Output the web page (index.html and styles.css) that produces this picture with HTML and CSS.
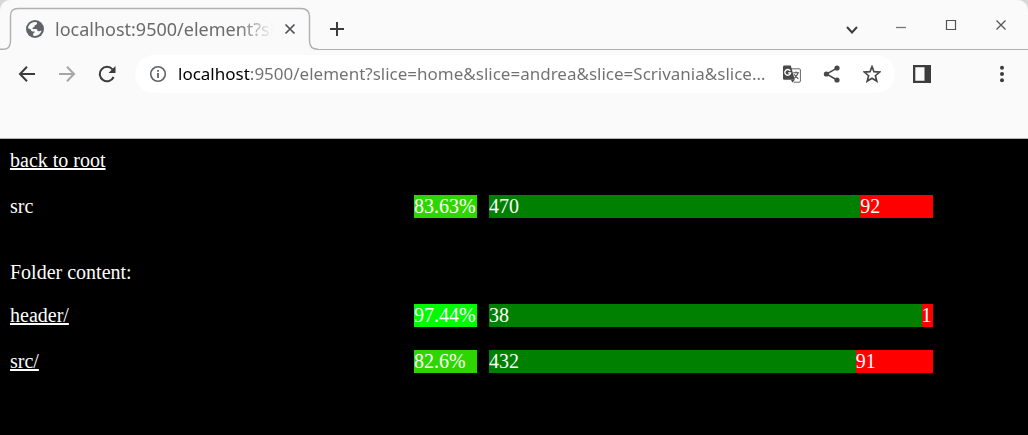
FILE: index.html
```html
<!DOCTYPE html>
<html lang="en">
<head>
<meta charset="utf-8">
<meta name="viewport" content="width=device-width, initial-scale=1">
<title>localhost:9500/element</title>
<link rel="stylesheet" href="styles.css">
</head>
<body>
<header class="browser">
  <div class="tabstrip">
    <div class="tab">
      <svg class="tab-outline" width="318" height="50" viewBox="0 0 318 50" fill="none" stroke="#b0b0b0" stroke-width="1.4"><path d="M0 49.3H3Q10.5 49.3 10.5 41V16Q10.5 8.5 18 8.5H301Q309.5 8.5 309.5 17V41Q309.5 49.3 318 49.3"/></svg>
      <svg class="icon" width="18" height="18" viewBox="0 0 18 18"><circle cx="9" cy="9" r="9" fill="#5f6368"/><path d="M2 8.2C2.3 5 5 2.3 8.5 2L10.8 2.3Q11.7 3.8 10.2 4.8L8.5 5.5V7L6.8 7.6L6.6 9H10Q11.7 9.2 11.5 11L13.4 11.3L15.5 10.6C14.8 13.8 12 16 9 16L7.2 15.7V13.2L8.6 12.5V11.6L6.5 11.5Q4.8 11 4.7 9.3Z" fill="#fafafa"/><path d="M10.7 5.8L12.7 4.4V3.1Q15.5 5 16 8L14 9.2L12.6 8.6L12.4 7.5L10.7 7.1Z" fill="#5f6368"/></svg>
      <span class="tab-title">localhost:9500/element?slice</span>
      <button class="icon-button close-tab" aria-label="Close tab"><svg width="12" height="12" viewBox="0 0 12 12" fill="none" stroke="#505256" stroke-width="1.7"><path d="M1.5 1.5L10.5 10.5M10.5 1.5L1.5 10.5"/></svg></button>
    </div>
    <div class="strip-rest">
      <button class="icon-button" aria-label="New tab"><svg width="16" height="16" viewBox="0 0 16 16" fill="none" stroke="#3c3c3c" stroke-width="2"><path d="M8 1V15M1 8H15"/></svg></button>
      <div class="window-controls">
        <button class="icon-button search-tabs" aria-label="Search tabs"><svg width="14" height="10" viewBox="0 0 14 10" fill="none" stroke="#3c3c3c" stroke-width="2"><path d="M2 2L7 7.5L12 2"/></svg></button>
        <button class="icon-button" aria-label="Minimize"><svg width="12" height="12" viewBox="0 0 12 12" fill="none" stroke="#777" stroke-width="1.3"><path d="M1 8.5H11"/></svg></button>
        <button class="icon-button" aria-label="Maximize"><svg width="12" height="12" viewBox="0 0 12 12" fill="none" stroke="#555" stroke-width="1.2"><path d="M1.5 1.5H10.5V10.5H1.5Z"/></svg></button>
        <button class="icon-button" aria-label="Close"><svg width="12" height="12" viewBox="0 0 12 12" fill="none" stroke="#555" stroke-width="1.3"><path d="M1.5 1.5L10.5 10.5M10.5 1.5L1.5 10.5"/></svg></button>
      </div>
    </div>
  </div>
  <div class="toolbar">
    <nav class="history" aria-label="History">
      <button class="icon-button" aria-label="Back"><svg width="18" height="18" viewBox="0 0 18 18" fill="none" stroke="#3c3c3c" stroke-width="2"><path d="M17 9H2.5M9 1.8L2 9L9 16.2"/></svg></button>
      <button class="icon-button" aria-label="Forward" disabled><svg width="18" height="18" viewBox="0 0 18 18" fill="none" stroke="#a6a6a6" stroke-width="2"><path d="M1 9H15.5M9 1.8L16 9L9 16.2"/></svg></button>
      <button class="icon-button" aria-label="Reload"><svg width="18" height="18" viewBox="0 0 18 18"><path d="M15.6 12A7.2 7.2 0 1 1 14.5 4.4" fill="none" stroke="#3c3c3c" stroke-width="2"/><path d="M17.5 1V8H10.5Z" fill="#3c3c3c"/></svg></button>
    </nav>
    <div class="omnibox">
      <button class="icon-button" aria-label="View site information"><svg width="18" height="18" viewBox="0 0 18 18"><circle cx="9" cy="9" r="7.3" fill="none" stroke="#5f6368" stroke-width="1.6"/><path d="M9 8V13M9 5V6.7" stroke="#5f6368" stroke-width="1.8"/></svg></button>
      <input class="address" type="text" aria-label="Address" value="localhost:9500/element?slice=home&amp;slice=andrea&amp;slice=Scrivania&amp;slice…">
      <button class="icon-button" aria-label="Translate this page"><svg width="18" height="18" viewBox="0 0 18 18"><path d="M8 3.8H16.2Q17.4 3.8 17.4 5V16Q17.4 17.2 16.2 17.2H10.5" fill="#fff" stroke="#666" stroke-width="1"/><path d="M1.2 0.5H7.8L11.8 14.7H1.2Q0 14.7 0 13.5V1.7Q0 .5 1.2 .5Z" fill="#484848"/><path d="M7.8 14.7H11.8L9.5 17.5Z" fill="#484848"/><path d="M7.2 5.8A2.9 2.9 0 1 0 7.6 7.9H5.1" fill="none" stroke="#fff" stroke-width="1.4"/><path d="M10.2 7.8H16M13 6.4V7.8M15 8Q14 11.2 11.3 13.2M11.2 9.2Q12.5 12 15.4 13.7" fill="none" stroke="#555" stroke-width="1.1"/></svg></button>
      <button class="icon-button" aria-label="Share this page"><svg width="18" height="18" viewBox="0 0 18 18"><path d="M14 3.2L3.5 9L14 15" fill="none" stroke="#484848" stroke-width="1.5"/><g fill="#484848"><circle cx="14" cy="3" r="2.6"/><circle cx="3.4" cy="9" r="2.6"/><circle cx="14" cy="15" r="2.6"/></g></svg></button>
      <button class="icon-button" aria-label="Bookmark this tab"><svg width="18" height="18" viewBox="0 0 18 18" fill="none" stroke="#484848" stroke-width="1.7"><path d="M9 1.6L11 6.7L16.7 7.1L12.4 10.7L13.8 16.1L9 13.2L4.2 16.1L5.6 10.7L1.3 7.1L7 6.7Z"/></svg></button>
    </div>
    <button class="icon-button side-panel" aria-label="Side panel"><svg width="18" height="18" viewBox="0 0 18 18"><path d="M0 0H18V18H0ZM2.3 2.3V15.7H11.5V2.3Z" fill="#3c3c3c" fill-rule="evenodd"/></svg></button>
    <button class="icon-button menu" aria-label="Menu"><svg width="18" height="18" viewBox="0 0 18 18" fill="#3c3c3c"><circle cx="9" cy="2.7" r="2"/><circle cx="9" cy="9" r="2"/><circle cx="9" cy="15.3" r="2"/></svg></button>
  </div>
</header>
<main class="report">
  <a class="back" href="#">back to root</a>
  <section class="row">
    <span>src</span>
    <span class="percent">83.63%</span>
    <div class="bar"><span class="covered" style="flex-grow:470">470</span><span class="missed" style="flex-grow:92">92</span></div>
  </section>
  <p class="heading">Folder content:</p>
  <section class="folder">
    <div class="row">
      <span><a href="#">header/</a></span>
      <span class="percent high">97.44%</span>
      <div class="bar"><span class="covered" style="flex-grow:38">38</span><span class="missed" style="flex-grow:1">1</span></div>
    </div>
    <div class="row">
      <span><a href="#">src/</a></span>
      <span class="percent">82.6%</span>
      <div class="bar"><span class="covered" style="flex-grow:432">432</span><span class="missed" style="flex-grow:91">91</span></div>
    </div>
  </section>
</main>
</body>
</html>
```
FILE: styles.css
```css
* {
  box-sizing: border-box;
}

html {
  background: #000;
}

body {
  margin: 0;
  background: #000;
  color: #fff;
  font: 20px/22px "Liberation Serif", serif;
}

.browser {
  background: #d8d8d8;
  border-bottom: 1px solid #b5b5b5;
  font-family: "Noto Sans", sans-serif;
}

.tabstrip {
  display: flex;
  height: 50px;
  background: #fafafa;
  border-radius: 10px 10px 0 0;
}

.tab {
  position: relative;
  flex: 0 0 318px;
  min-width: 0;
  width: 318px;
  display: flex;
  align-items: center;
  padding: 8px 22px 0 26px;
}

.tab-outline {
  position: absolute;
  inset: 0;
}

.tab-title {
  flex: 1;
  min-width: 0;
  margin: 0 11px;
  overflow: hidden;
  white-space: nowrap;
  color: #6b6b6b;
  font-size: 18px;
  -webkit-mask-image: linear-gradient(to right, #000 84%, transparent);
  mask-image: linear-gradient(to right, #000 84%, transparent);
}

.icon,
.icon-button {
  flex: none;
}

.icon-button {
  display: flex;
  align-items: center;
  justify-content: center;
  padding: 0;
  border: 0;
  background: none;
}

.strip-rest {
  flex: 1;
  display: flex;
  align-items: center;
  justify-content: space-between;
  padding: 8px 21px 0 11px;
  border-bottom: 1px solid #b0b0b0;
}

.window-controls {
  display: flex;
  align-items: center;
  gap: 38px;
  padding-bottom: 8px;
}

.search-tabs {
  margin-right: -2px;
  padding-top: 10px;
}

.toolbar {
  display: flex;
  align-items: center;
  padding: 5px 17px 45px 18px;
  background: #fafafa;
}

.history {
  display: flex;
  gap: 22px;
  margin-right: 19px;
}

.omnibox {
  flex: 1;
  display: flex;
  align-items: center;
  gap: 22px;
  height: 38px;
  padding: 0 14px;
  border-radius: 19px;
  background: #fff;
}

.address {
  flex: 1;
  min-width: 0;
  height: 30px;
  margin: 0 -6px 0 -11px;
  padding: 0;
  border: 0;
  outline: 0;
  background: linear-gradient(to right, #000 73px, #707070 73px);
  -webkit-background-clip: text;
  background-clip: text;
  color: transparent;
  caret-color: #000;
  font: 17px/30px "Noto Sans", sans-serif;
}

.side-panel {
  margin-left: 18px;
}

.menu {
  margin-left: 62px;
}

.report {
  padding: 10px;
}

.report a {
  color: inherit;
}

.back {
  display: block;
  width: max-content;
  margin-bottom: 24px;
}

.row {
  display: grid;
  grid-template-columns: 404fr 63px 12px 444fr 85fr;
  min-height: 23px;
}

.percent {
  background: #2ed600;
}

.percent.high {
  background: #00fa00;
}

.bar {
  grid-column: 4;
  display: flex;
}

.covered,
.missed {
  flex-basis: 0;
  min-width: 0;
}

.covered {
  background: #008000;
}

.missed {
  background: #f00;
}

.heading {
  margin: 43px 0 21px;
}

.folder {
  display: grid;
  gap: 23px;
}
```
